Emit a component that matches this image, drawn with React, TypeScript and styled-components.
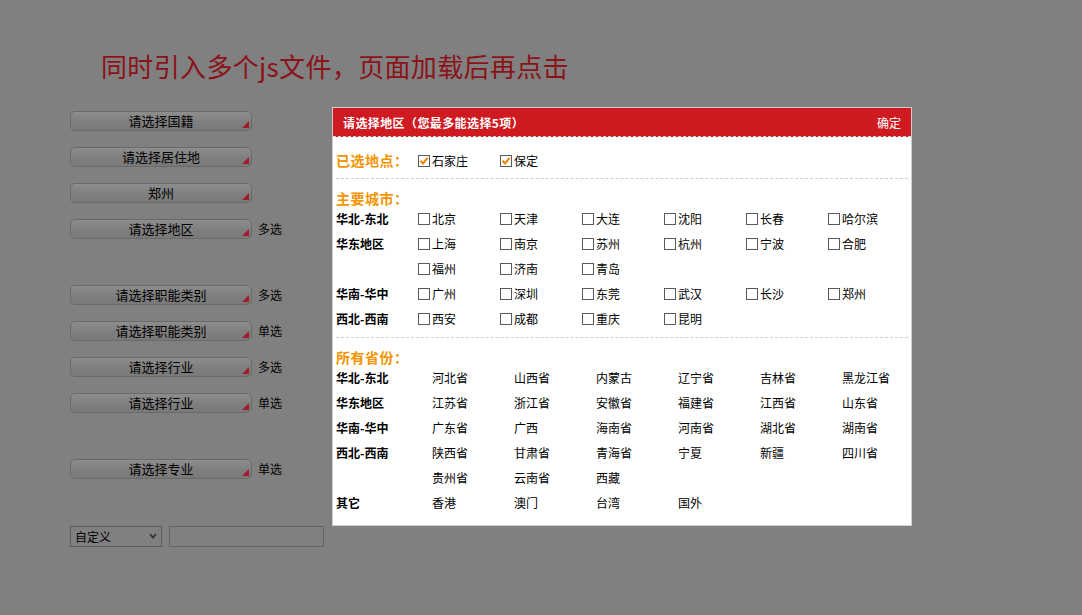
import React from "react";
import styled, { createGlobalStyle } from "styled-components";

const GlobalStyle = createGlobalStyle`
  html, body {
    margin: 0;
    padding: 0;
    background: #808080;
  }
  body {
    font-family: "Noto Sans CJK SC", "Liberation Sans", sans-serif;
    font-size: 12px;
    color: #000;
  }
`;

const Page = styled.div`
  position: relative;
  width: 1082px;
  height: 615px;
  padding: 51px 0 0 70px;
  box-sizing: border-box;
  overflow: hidden;
`;

const Title = styled.h1`
  margin: 0 0 30px 31px;
  font-size: 26px;
  line-height: 30px;
  font-weight: 400;
  color: #8c1219;
  letter-spacing: 0.35px;
`;

const ButtonList = styled.div`
  display: flex;
  flex-direction: column;
  gap: 16px;
`;

const Row = styled.div<{ $extra?: number }>`
  display: flex;
  align-items: center;
  gap: 6px;
  height: 20px;
  margin-top: ${(p) => p.$extra ?? 0}px;
`;

const PickButton = styled.button`
  position: relative;
  width: 182px;
  height: 20px;
  padding: 0;
  border: 1px solid #6a6a6a;
  border-radius: 5px;
  background: linear-gradient(#8d8d8d, #7e7e7e 60%, #797979);
  font-family: "Noto Sans CJK SC", sans-serif;
  font-size: 13px;
  line-height: 18px;
  color: #000;
  text-align: center;
  cursor: pointer;
`;

const Corner = styled.span`
  position: absolute;
  right: 2px;
  bottom: 2px;
  width: 0;
  height: 0;
  border-style: solid;
  border-width: 0 0 7px 7px;
  border-color: transparent transparent #a51a29 transparent;
`;

const Suffix = styled.span`
  font-size: 12px;
  line-height: 20px;
`;

const SelectWrap = styled.div`
  position: relative;
  width: 92px;
  height: 21px;
`;

const Select = styled.select`
  appearance: none;
  width: 92px;
  height: 21px;
  padding: 0 0 0 4px;
  border: 1px solid #5c5c5c;
  background: #808080;
  font-family: "Noto Sans CJK SC", sans-serif;
  font-size: 12px;
  color: #000;
`;

const Chevron = styled.svg`
  position: absolute;
  right: 5px;
  top: 7px;
  pointer-events: none;
`;

const TextInput = styled.input`
  width: 155px;
  height: 21px;
  box-sizing: border-box;
  border: 1px solid #636363;
  background: #808080;
  margin-left: 1px;
`;

const Dialog = styled.div`
  position: absolute;
  left: 332px;
  top: 107px;
  width: 578px;
  background: #fff;
  border: 1px solid #cfcfcf;
`;

const DialogHeader = styled.div`
  display: flex;
  align-items: center;
  justify-content: space-between;
  height: 28px;
  padding: 0 10px;
  background: #d01a21;
  border-bottom: 1px dashed #d0d0d0;
  color: #fff;
  font-size: 12px;
`;

const HeaderTitle = styled.span`
  font-weight: 700;
  letter-spacing: 0.4px;
`;

const HeaderAction = styled.span`
  cursor: pointer;
`;

const DialogBody = styled.div`
  padding: 0 3px;
`;

const Section = styled.div<{ $top: number; $bottom: number; $last?: boolean }>`
  padding: ${(p) => p.$top}px 0 ${(p) => p.$bottom}px;
  border-bottom: ${(p) => (p.$last ? "none" : "1px dashed #cfcfcf")};
`;

const SectionHeading = styled.div`
  font-size: 14px;
  line-height: 15px;
  font-weight: 700;
  color: #f39400;
  letter-spacing: 0.5px;
`;

const RegionRow = styled.div`
  display: flex;
  align-items: flex-start;
`;

const RegionLabel = styled.div<{ $orange?: boolean }>`
  flex: 0 0 82px;
  font-size: ${(p) => (p.$orange ? 14 : 12)}px;
  line-height: 25px;
  font-weight: 700;
  letter-spacing: ${(p) => (p.$orange ? 0.5 : 0)}px;
  color: ${(p) => (p.$orange ? "#f39400" : "#000")};
`;

const Items = styled.div`
  display: flex;
  flex: 0 0 492px;
  flex-wrap: wrap;
  width: 492px;
`;

const Item = styled.label<{ $plain?: boolean }>`
  display: flex;
  align-items: center;
  gap: 2px;
  width: 82px;
  height: 25px;
  padding-left: ${(p) => (p.$plain ? 14 : 0)}px;
  box-sizing: border-box;
  font-size: 12px;
  white-space: nowrap;
`;

const Box = styled.span`
  position: relative;
  flex: 0 0 auto;
  width: 10px;
  height: 10px;
  border: 1px solid #5a5a5a;
  background: #fff;
`;

const Check = styled.svg`
  position: absolute;
  left: 0;
  top: 0;
`;

function CheckBox({ checked }: { checked?: boolean }) {
  return (
    <Box>
      {checked && (
        <Check width="10" height="10" viewBox="0 0 10 10">
          <polyline points="1.5,4.8 4,7.5 8.6,1.8" fill="none" stroke="#f08300" strokeWidth="2" />
        </Check>
      )}
    </Box>
  );
}

const cityRows: { label: string; items: string[] }[] = [
  { label: "华北-东北", items: ["北京", "天津", "大连", "沈阳", "长春", "哈尔滨"] },
  { label: "华东地区", items: ["上海", "南京", "苏州", "杭州", "宁波", "合肥", "福州", "济南", "青岛"] },
  { label: "华南-华中", items: ["广州", "深圳", "东莞", "武汉", "长沙", "郑州"] },
  { label: "西北-西南", items: ["西安", "成都", "重庆", "昆明"] },
];

const provinceRows: { label: string; items: string[] }[] = [
  { label: "华北-东北", items: ["河北省", "山西省", "内蒙古", "辽宁省", "吉林省", "黑龙江省"] },
  { label: "华东地区", items: ["江苏省", "浙江省", "安徽省", "福建省", "江西省", "山东省"] },
  { label: "华南-华中", items: ["广东省", "广西", "海南省", "河南省", "湖北省", "湖南省"] },
  { label: "西北-西南", items: ["陕西省", "甘肃省", "青海省", "宁夏", "新疆", "四川省", "贵州省", "云南省", "西藏"] },
  { label: "其它", items: ["香港", "澳门", "台湾", "国外"] },
];

const buttons: { text: string; suffix?: string; extra?: number }[] = [
  { text: "请选择国籍" },
  { text: "请选择居住地" },
  { text: "郑州" },
  { text: "请选择地区", suffix: "多选" },
  { text: "请选择职能类别", suffix: "多选", extra: 30 },
  { text: "请选择职能类别", suffix: "单选" },
  { text: "请选择行业", suffix: "多选" },
  { text: "请选择行业", suffix: "单选" },
  { text: "请选择专业", suffix: "单选", extra: 30 },
];

export default function App() {
  return (
    <>
      <GlobalStyle />
      <Page>
        <Title>同时引入多个js文件，页面加载后再点击</Title>
        <ButtonList>
          {buttons.map((b, i) => (
            <Row key={i} $extra={b.extra}>
              <PickButton type="button">
                {b.text}
                <Corner />
              </PickButton>
              {b.suffix && <Suffix>{b.suffix}</Suffix>}
            </Row>
          ))}
          <Row $extra={31}>
            <SelectWrap>
              <Select defaultValue="custom">
                <option value="custom">自定义</option>
              </Select>
              <Chevron width="8" height="6" viewBox="0 0 8 6">
                <polyline points="1,1 4,4.5 7,1" fill="none" stroke="#333" strokeWidth="1.8" />
              </Chevron>
            </SelectWrap>
            <TextInput type="text" />
          </Row>
        </ButtonList>

        <Dialog>
          <DialogHeader>
            <HeaderTitle>请选择地区（您最多能选择5项）</HeaderTitle>
            <HeaderAction>确定</HeaderAction>
          </DialogHeader>
          <DialogBody>
            <Section $top={11} $bottom={5}>
              <RegionRow>
                <RegionLabel $orange>已选地点：</RegionLabel>
                <Items>
                  <Item>
                    <CheckBox checked />
                    石家庄
                  </Item>
                  <Item>
                    <CheckBox checked />
                    保定
                  </Item>
                </Items>
              </RegionRow>
            </Section>
            <Section $top={12} $bottom={6}>
              <SectionHeading>主要城市：</SectionHeading>
              {cityRows.map((r) => (
                <RegionRow key={r.label}>
                  <RegionLabel>{r.label}</RegionLabel>
                  <Items>
                    {r.items.map((c) => (
                      <Item key={c}>
                        <CheckBox />
                        {c}
                      </Item>
                    ))}
                  </Items>
                </RegionRow>
              ))}
            </Section>
            <Section $top={12} $bottom={10} $last>
              <SectionHeading>所有省份：</SectionHeading>
              {provinceRows.map((r) => (
                <RegionRow key={r.label}>
                  <RegionLabel>{r.label}</RegionLabel>
                  <Items>
                    {r.items.map((c) => (
                      <Item key={c} $plain>
                        {c}
                      </Item>
                    ))}
                  </Items>
                </RegionRow>
              ))}
            </Section>
          </DialogBody>
        </Dialog>
      </Page>
    </>
  );
}
